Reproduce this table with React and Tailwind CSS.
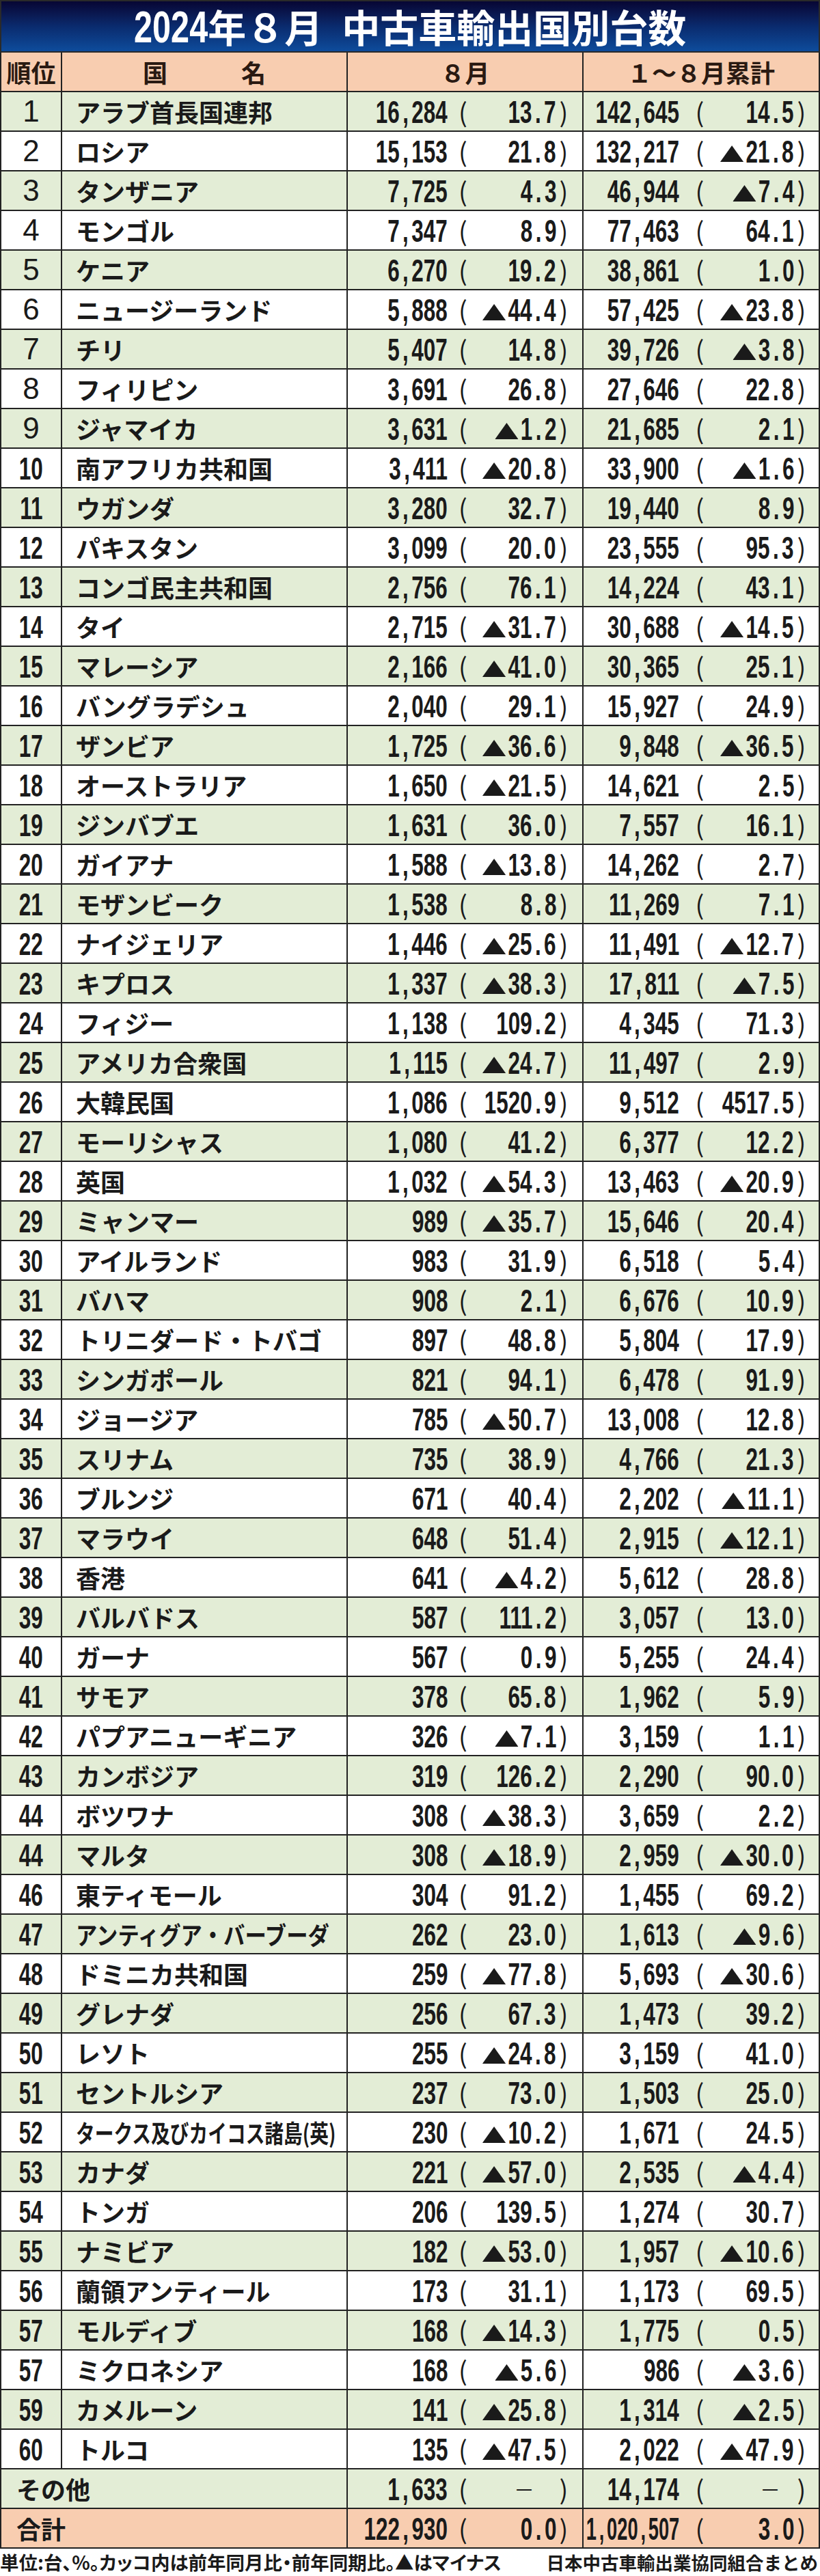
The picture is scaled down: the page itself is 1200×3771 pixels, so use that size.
import React from "react";

// rank, country, Aug units, Aug %, Jan-Aug units, Jan-Aug %
const rows = [
  [1, "アラブ首長国連邦", "16,284", "13.7", "142,645", "14.5"],
  [2, "ロシア", "15,153", "21.8", "132,217", "▲21.8"],
  [3, "タンザニア", "7,725", "4.3", "46,944", "▲7.4"],
  [4, "モンゴル", "7,347", "8.9", "77,463", "64.1"],
  [5, "ケニア", "6,270", "19.2", "38,861", "1.0"],
  [6, "ニュージーランド", "5,888", "▲44.4", "57,425", "▲23.8"],
  [7, "チリ", "5,407", "14.8", "39,726", "▲3.8"],
  [8, "フィリピン", "3,691", "26.8", "27,646", "22.8"],
  [9, "ジャマイカ", "3,631", "▲1.2", "21,685", "2.1"],
  [10, "南アフリカ共和国", "3,411", "▲20.8", "33,900", "▲1.6"],
  [11, "ウガンダ", "3,280", "32.7", "19,440", "8.9"],
  [12, "パキスタン", "3,099", "20.0", "23,555", "95.3"],
  [13, "コンゴ民主共和国", "2,756", "76.1", "14,224", "43.1"],
  [14, "タイ", "2,715", "▲31.7", "30,688", "▲14.5"],
  [15, "マレーシア", "2,166", "▲41.0", "30,365", "25.1"],
  [16, "バングラデシュ", "2,040", "29.1", "15,927", "24.9"],
  [17, "ザンビア", "1,725", "▲36.6", "9,848", "▲36.5"],
  [18, "オーストラリア", "1,650", "▲21.5", "14,621", "2.5"],
  [19, "ジンバブエ", "1,631", "36.0", "7,557", "16.1"],
  [20, "ガイアナ", "1,588", "▲13.8", "14,262", "2.7"],
  [21, "モザンビーク", "1,538", "8.8", "11,269", "7.1"],
  [22, "ナイジェリア", "1,446", "▲25.6", "11,491", "▲12.7"],
  [23, "キプロス", "1,337", "▲38.3", "17,811", "▲7.5"],
  [24, "フィジー", "1,138", "109.2", "4,345", "71.3"],
  [25, "アメリカ合衆国", "1,115", "▲24.7", "11,497", "2.9"],
  [26, "大韓民国", "1,086", "1520.9", "9,512", "4517.5"],
  [27, "モーリシャス", "1,080", "41.2", "6,377", "12.2"],
  [28, "英国", "1,032", "▲54.3", "13,463", "▲20.9"],
  [29, "ミャンマー", "989", "▲35.7", "15,646", "20.4"],
  [30, "アイルランド", "983", "31.9", "6,518", "5.4"],
  [31, "バハマ", "908", "2.1", "6,676", "10.9"],
  [32, "トリニダード・トバゴ", "897", "48.8", "5,804", "17.9"],
  [33, "シンガポール", "821", "94.1", "6,478", "91.9"],
  [34, "ジョージア", "785", "▲50.7", "13,008", "12.8"],
  [35, "スリナム", "735", "38.9", "4,766", "21.3"],
  [36, "ブルンジ", "671", "40.4", "2,202", "▲11.1"],
  [37, "マラウイ", "648", "51.4", "2,915", "▲12.1"],
  [38, "香港", "641", "▲4.2", "5,612", "28.8"],
  [39, "バルバドス", "587", "111.2", "3,057", "13.0"],
  [40, "ガーナ", "567", "0.9", "5,255", "24.4"],
  [41, "サモア", "378", "65.8", "1,962", "5.9"],
  [42, "パプアニューギニア", "326", "▲7.1", "3,159", "1.1"],
  [43, "カンボジア", "319", "126.2", "2,290", "90.0"],
  [44, "ボツワナ", "308", "▲38.3", "3,659", "2.2"],
  [44, "マルタ", "308", "▲18.9", "2,959", "▲30.0"],
  [46, "東ティモール", "304", "91.2", "1,455", "69.2"],
  [47, "アンティグア・バーブーダ", "262", "23.0", "1,613", "▲9.6"],
  [48, "ドミニカ共和国", "259", "▲77.8", "5,693", "▲30.6"],
  [49, "グレナダ", "256", "67.3", "1,473", "39.2"],
  [50, "レソト", "255", "▲24.8", "3,159", "41.0"],
  [51, "セントルシア", "237", "73.0", "1,503", "25.0"],
  [52, "タークス及びカイコス諸島(英)", "230", "▲10.2", "1,671", "24.5"],
  [53, "カナダ", "221", "▲57.0", "2,535", "▲4.4"],
  [54, "トンガ", "206", "139.5", "1,274", "30.7"],
  [55, "ナミビア", "182", "▲53.0", "1,957", "▲10.6"],
  [56, "蘭領アンティール", "173", "31.1", "1,173", "69.5"],
  [57, "モルディブ", "168", "▲14.3", "1,775", "0.5"],
  [57, "ミクロネシア", "168", "▲5.6", "986", "▲3.6"],
  [59, "カメルーン", "141", "▲25.8", "1,314", "▲2.5"],
  [60, "トルコ", "135", "▲47.5", "2,022", "▲47.9"],
];

function Tri() {
  return (
    <svg viewBox="0 0 50 24" preserveAspectRatio="none" className="mr-[5px] inline-block h-[24px] w-[51px]">
      <polygon points="0,24 25,0 50,24" fill="currentColor" />
    </svg>
  );
}

// condensed tabular digits: comma and dot take a full digit slot
function Digits({ text, tight, center }) {
  let cls =
    "inline-block shrink-0 whitespace-nowrap origin-right scale-x-[0.67] font-['Liberation_Sans',Arial,sans-serif] text-[47px] font-bold leading-none";
  if (tight)
    cls =
      "inline-block shrink-0 whitespace-nowrap origin-right scale-x-[0.58] font-['Liberation_Sans',Arial,sans-serif] text-[47px] font-bold leading-none";
  if (center)
    cls =
      "inline-block shrink-0 whitespace-nowrap origin-center scale-x-[0.67] font-['Liberation_Sans',Arial,sans-serif] text-[47px] font-bold leading-none";
  return (
    <span className={cls}>
      {text.split("").map((c, i) =>
        c === "▲" ? (
          <Tri key={i} />
        ) : c === "," || c === "." ? (
          <span key={i} className="inline-block w-[0.556em] text-center">
            {c}
          </span>
        ) : (
          c
        )
      )}
    </span>
  );
}

function Paren({ children }) {
  return <span className="text-[38px] font-normal leading-none">{children}</span>;
}

function Val({ n, p, cum, tight }) {
  const dash = p === "－";
  return (
    <div className={cum ? "flex items-center" : "flex items-center border-r-2 border-[#222]"}>
      <div className={cum ? "flex w-[140px] shrink-0 justify-end" : "flex w-[146px] shrink-0 justify-end"}>
        <Digits text={n} tight={tight} />
      </div>
      <div className={cum ? "flex w-[60px] shrink-0 justify-center" : "flex w-[45px] shrink-0 justify-center"}>
        <Paren>(</Paren>
      </div>
      {dash ? (
        <div className={cum ? "flex w-[108px] shrink-0 justify-end pr-[20px]" : "flex w-[114px] shrink-0 justify-end pr-[32px]"}>
          <span className="text-[30px] font-normal leading-none">－</span>
        </div>
      ) : (
        <div className={cum ? "flex w-[108px] shrink-0 justify-end" : "flex w-[114px] shrink-0 justify-end"}>
          <Digits text={p} />
        </div>
      )}
      <div className="flex w-[22px] shrink-0 justify-center">
        <Paren>)</Paren>
      </div>
    </div>
  );
}

function Name({ name }) {
  if (name === "タークス及びカイコス諸島(英)")
    return (
      <span className="inline-block shrink-0 origin-left scale-x-[0.77] whitespace-nowrap text-[36px] font-bold leading-none">
        {name}
      </span>
    );
  if (name === "アンティグア・バーブーダ")
    return (
      <span className="inline-block shrink-0 origin-left scale-x-[0.87] whitespace-nowrap text-[36px] font-bold leading-none">
        {name}
      </span>
    );
  return <span className="whitespace-nowrap text-[36px] font-bold leading-none">{name}</span>;
}

function Row({ r, i }) {
  const [rank, name, n1, p1, n2, p2] = r;
  return (
    <div
      className={
        i % 2 === 0
          ? "grid h-[58px] grid-cols-[89px_418px_345px_1fr] border-b-2 border-[#222] bg-[#e3edd6]"
          : "grid h-[58px] grid-cols-[89px_418px_345px_1fr] border-b-2 border-[#222] bg-white"
      }
    >
      <div className="flex items-center justify-center border-r-2 border-[#222]">
        {rank < 10 ? (
          <span className="font-['Liberation_Sans',Arial,sans-serif] text-[44px] font-normal leading-none">{rank}</span>
        ) : (
          <Digits text={String(rank)} center />
        )}
      </div>
      <div className="flex items-center overflow-hidden border-r-2 border-[#222] pl-[20px]">
        <Name name={name} />
      </div>
      <Val n={n1} p={p1} />
      <Val n={n2} p={p2} cum />
    </div>
  );
}

export default function App() {
  return (
    <div className="w-[1200px] bg-white font-['Noto_Sans_CJK_JP',sans-serif] text-[#1a1a1a]">
      {/* title bar */}
      <div className="flex h-[77px] items-center justify-center border-2 border-[#2a2a2a] bg-linear-to-b from-[#070634] via-[#0a2b6e] to-[#0e4c9c] text-white">
        <div className="flex items-baseline pt-[2px]">
          <span className="-mr-[34px] inline-block origin-left scale-x-[0.76] font-['Liberation_Sans',Arial,sans-serif] text-[64px] font-bold leading-none">
            2024
          </span>
          <span className="text-[56px] font-bold leading-none">年８月</span>
          <span className="w-[28px]" />
          <span className="text-[56px] font-bold leading-none">中古車輸出国別台数</span>
        </div>
      </div>

      <div className="border-x-2 border-[#222]">
        {/* header */}
        <div className="grid h-[58px] grid-cols-[89px_418px_345px_1fr] border-b-2 border-[#222] bg-[#f8cdb0] text-[36px] font-bold leading-none text-[#2a1a12]">
          <div className="flex items-center justify-center border-r-2 border-[#222]">順位</div>
          <div className="flex items-center justify-center border-r-2 border-[#222]">国　　　名</div>
          <div className="flex items-center justify-center border-r-2 border-[#222]">８月</div>
          <div className="flex items-center justify-center">１～８月累計</div>
        </div>

        {rows.map((r, i) => (
          <Row key={i} r={r} i={i} />
        ))}

        {/* others */}
        <div className="grid h-[58px] grid-cols-[507px_345px_1fr] border-b-2 border-[#222] bg-[#e3edd6]">
          <div className="flex items-center border-r-2 border-[#222] pl-[22px] text-[36px] font-bold leading-none">その他</div>
          <Val n="1,633" p="－" />
          <Val n="14,174" p="－" cum />
        </div>

        {/* total */}
        <div className="grid h-[58px] grid-cols-[507px_345px_1fr] border-b-2 border-[#222] bg-[#f8cdb0]">
          <div className="flex items-center border-r-2 border-[#222] pl-[22px] text-[36px] font-bold leading-none">合計</div>
          <Val n="122,930" p="0.0" />
          <Val n="1,020,507" p="3.0" cum tight />
        </div>
      </div>

      {/* footnote */}
      <div className="flex h-[40px] items-center justify-between font-bold leading-none">
        <span className="whitespace-nowrap text-[27.5px] [font-feature-settings:'palt']">単位:台、%。カッコ内は前年同月比・前年同期比。▲はマイナス</span>
        <span className="whitespace-nowrap pr-[3px] text-[26.5px]">日本中古車輸出業協同組合まとめ</span>
      </div>
    </div>
  );
}
